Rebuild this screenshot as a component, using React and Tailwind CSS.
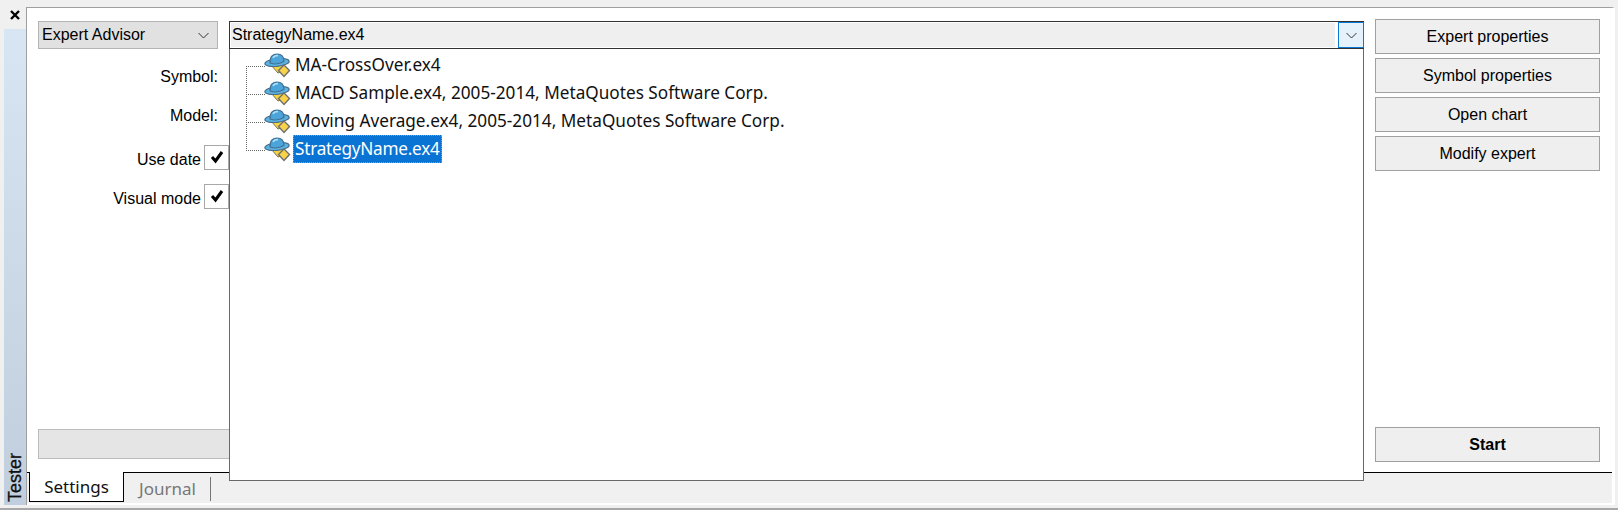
import React from "react";

const Chevron = ({ className = "" }) => (
  <svg width="11" height="7" viewBox="0 0 11 7" className={className} fill="none" stroke="#333" strokeWidth="1">
    <path d="M0.5 1 L5.5 6 L10.5 1" />
  </svg>
);

const Check = () => (
  <svg width="14" height="13" viewBox="0 0 14 13" fill="none" stroke="#000" strokeWidth="3">
    <path d="M2 6 L5.5 10 L12 1" />
  </svg>
);

const Hat = () => (
  <svg width="27" height="25" viewBox="0 0 27 25" className="shrink-0">
    <path d="M7 12 L20 11 L19 18 L14 20 Z" fill="#f5d33f" stroke="#77705a" strokeWidth="1" />
    <ellipse cx="13" cy="9.5" rx="12.2" ry="3.8" fill="#5cb4e4" stroke="#4a6f8c" strokeWidth="1.2" transform="rotate(-6 13 9.5)" />
    <path d="M6 10 C6 3 9 1 13 1 C17 1 20 3 20 8.5 C16 11 10 11.5 6 10 Z" fill="#4ba4da" stroke="#44708f" strokeWidth="1.2" />
    <path d="M9 5 C10 3 12 2.5 14 2.5" fill="none" stroke="#b6e2f8" strokeWidth="1.4" />
    <path d="M20 12 L25.5 17.5 L20 23.5 L14.5 17.5 Z" fill="#f8d34a" stroke="#6f6f6f" strokeWidth="1.4" />
  </svg>
);

const SideButton = ({ children, className = "" }) => (
  <button className={`h-[35px] w-[225px] border border-[#a0a0a0] bg-[#efefef] text-[16px] leading-none text-black ${className}`}>
    {children}
  </button>
);

const TreeRow = ({ children, selected }) => (
  <div className="flex h-[28px] items-center pl-[34px]">
    <Hat />
    {selected ? (
      <span className="ml-[2px] flex h-[28px] items-center border border-dotted border-[#e0902a] bg-[#0a74d4] px-[1px] tracking-[-0.25px] text-white">
        {children}
      </span>
    ) : (
      <span className="ml-[4px]">{children}</span>
    )}
  </div>
);

const FormRow = ({ label, children, className = "", labelClass = "" }) => (
  <div className={`flex items-center justify-end ${className}`}>
    <span className={`text-[16px] leading-none text-black ${labelClass}`}>{label}</span>
    {children}
  </div>
);

const CheckBox = () => (
  <div className="ml-[3px] flex h-[25px] w-[25px] items-center justify-center border border-[#a8a8a8] bg-white">
    <Check />
  </div>
);

export default function App() {
  return (
    <div className="relative flex h-[512px] w-[1618px] flex-col overflow-hidden bg-[#f0f0f0] font-['Liberation_Sans',Arial,sans-serif]">
      <div className="flex h-[505px] shrink-0 pt-[7px] pl-[4px] pr-[3px]">
        {/* Side strip */}
        <div className="flex w-[22px] shrink-0 flex-col">
          <div className="flex h-[22px] items-center justify-center pb-[6px]">
            <svg width="10" height="10" viewBox="0 0 10 10" stroke="#000" strokeWidth="2.4">
              <path d="M1 1 L9 9 M9 1 L1 9" />
            </svg>
          </div>
          <div className="flex flex-1 items-end justify-center bg-gradient-to-b from-[#d8e6f3] to-[#c0cedd] pb-[3px]">
            <span className="rotate-180 text-[18px] leading-none text-[#111] [writing-mode:vertical-rl] [-webkit-text-stroke:0.3px_#111]">
              Tester
            </span>
          </div>
        </div>

        {/* Main panel */}
        <div className="flex min-w-0 flex-1 flex-col border-l border-t border-r-[3px] border-[#a0a0a0] border-r-white bg-white pb-[2px]">
          <div className="flex flex-1 pl-[11px] pr-[12px] pt-[11px]">
            <div className="relative flex min-w-0 flex-1 flex-col pb-[13px]">
              {/* Top row */}
              <div className="mt-[2px] flex h-[28px] shrink-0 gap-[11px]">
                <div className="flex w-[180px] items-center justify-between border border-[#b4b4b4] bg-[#e1e1e1] pl-[3px] pr-[8px] text-[16px] text-black">
                  <span>Expert Advisor</span>
                  <Chevron />
                </div>
                <div className="flex flex-1 items-stretch border border-[#333] border-r-0 bg-white">
                  <div className="m-[1px] mr-[3px] flex flex-1 items-center bg-[#efefef] pl-[1px] text-[16px] text-black">
                    StrategyName.ex4
                  </div>
                  <div className="flex w-[26px] items-center justify-center border border-[#0a78d4] bg-[#e5f1fb]">
                    <Chevron />
                  </div>
                </div>
              </div>

              {/* Form rows */}
              <div className="flex w-[191px] flex-col">
                <FormRow label="Symbol:" className="mt-[18px] h-[20px] pr-[11px]" />
                <FormRow label="Model:" className="mt-[19px] h-[20px] pr-[11px]" />
                <FormRow label="Use date" labelClass="pt-[4px]" className="mt-[19px] h-[25px]">
                  <CheckBox />
                </FormRow>
                <FormRow label="Visual mode" labelClass="pt-[4px]" className="mt-[14px] h-[25px]">
                  <CheckBox />
                </FormRow>
              </div>

              {/* Progress bar */}
              <div className="mt-auto h-[30px] shrink-0 border border-[#bcbcbc] bg-[#e5e5e5]" />

              {/* Dropdown tree, open over the form */}
              <div className="absolute left-[191px] right-0 top-[30px] z-10 h-[432px] border border-t-0 border-[#696969] bg-white pt-[2px] font-['Noto_Sans',sans-serif] text-[17.2px] leading-none text-[#111]">
                <svg className="absolute left-[16px] top-[17px]" width="30" height="88" fill="none" stroke="#666" strokeWidth="1" strokeDasharray="1 1">
                  <path d="M0.5 0 V84 M0 0.5 H19 M0 28.5 H19 M0 56.5 H19 M0 84.5 H19" />
                </svg>
                <div className="relative">
                  <TreeRow>MA-CrossOver.ex4</TreeRow>
                  <TreeRow>MACD Sample.ex4, 2005-2014, MetaQuotes Software Corp.</TreeRow>
                  <TreeRow>Moving Average.ex4, 2005-2014, MetaQuotes Software Corp.</TreeRow>
                  <TreeRow selected>StrategyName.ex4</TreeRow>
                </div>
              </div>
            </div>

            {/* Buttons */}
            <div className="ml-[11px] flex w-[225px] shrink-0 flex-col gap-[4px] pb-[10px]">
              <SideButton>Expert properties</SideButton>
              <SideButton>Symbol properties</SideButton>
              <SideButton>Open chart</SideButton>
              <SideButton>Modify expert</SideButton>
              <SideButton className="mt-auto font-bold">Start</SideButton>
            </div>
          </div>

          {/* Tabs */}
          <div className="flex h-[31px] shrink-0 border-t border-black bg-[#f0f0f0] pl-[2px]">
            <div className="-mt-px flex h-[30px] w-[95px] items-center justify-center border-x border-b border-black border-t-white bg-white font-['Noto_Sans',sans-serif] text-[17px] text-[#111]">
              Settings
            </div>
            <div className="mt-[4px] flex h-[24px] items-center border-r border-[#777] pl-[15px] pr-[14px] font-['Noto_Sans',sans-serif] text-[17px] text-[#777]">
              Journal
            </div>
          </div>
        </div>
      </div>
      <div className="mt-[3px] h-[2px] shrink-0 bg-[#a8a8a8]" />
      <div className="flex-1 bg-white" />
    </div>
  );
}
